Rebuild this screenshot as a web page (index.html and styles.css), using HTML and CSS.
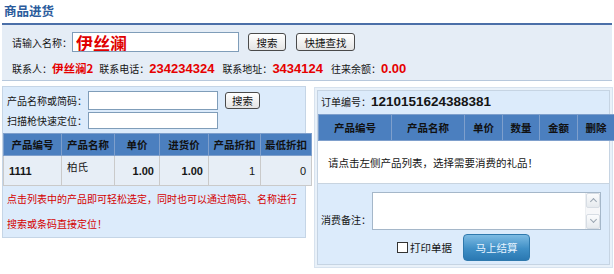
FILE: index.html
```html
<!DOCTYPE html>
<html lang="zh-CN">
<head>
    <title>商品进货</title>
    <meta charset="utf-8">
    <link rel="stylesheet" href="styles.css">
</head>
<body>
    <div class="page">
        <h2 class="page-title">商品进货</h2>

        <div class="topbar">
            <div class="top-row">
                <span class="label">请输入名称：</span>
                <input type="text" class="name-input" value="伊丝澜">
                <button type="button" class="btn btn-search">搜索</button>
                <button type="button" class="btn btn-quick">快捷查找</button>
            </div>
            <div class="contact-row">
                <span>联系人：</span><b class="red name">伊丝澜2</b>
                <span>联系电话：</span><b class="red">234234324</b>
                <span>联系地址：</span><b class="red">3434124</b>
                <span>往来余额：</span><b class="red">0.00</b>
            </div>
        </div>

        <div class="main">
            <div class="left-panel">
                <div class="search-box">
                    <div class="search-row">
                        <span class="label">产品名称或简码：</span>
                        <input type="text" class="code-input">
                        <button type="button" class="btn btn-find">搜索</button>
                    </div>
                    <div class="search-row">
                        <span class="label">扫描枪快速定位：</span>
                        <input type="text" class="code-input scan">
                    </div>
                </div>
                <table class="grid product-grid">
                    <thead>
                        <tr>
                            <th class="c1">产品编号</th>
                            <th class="c2">产品名称</th>
                            <th class="c3">单价</th>
                            <th class="c4">进货价</th>
                            <th class="c5">产品折扣</th>
                            <th class="c6">最低折扣</th>
                        </tr>
                    </thead>
                    <tbody>
                        <tr>
                            <td class="bold">1111</td>
                            <td class="name-cell">柏氏</td>
                            <td class="num bold">1.00</td>
                            <td class="num bold">1.00</td>
                            <td class="num">1</td>
                            <td class="num">0</td>
                        </tr>
                    </tbody>
                </table>
                <p class="tip">点击列表中的产品即可轻松选定，同时也可以通过简码、名称进行搜索或条码直接定位！</p>
            </div>

            <div class="right-panel">
                <div class="order-box">
                    <div class="order-no">订单编号：<b>1210151624388381</b></div>
                    <table class="grid order-grid">
                        <thead>
                            <tr>
                                <th class="o1">产品编号</th>
                                <th class="o2">产品名称</th>
                                <th class="o3">单价</th>
                                <th class="o4">数量</th>
                                <th class="o5">金额</th>
                                <th class="o6">删除</th>
                            </tr>
                        </thead>
                    </table>
                    <div class="order-empty">请点击左侧产品列表，选择需要消费的礼品！</div>
                    <div class="remark-row">
                        <span class="label">消费备注：</span>
                        <div class="remark-box">
                            <textarea class="remark"></textarea>
                            <div class="scrollbar">
                                <span class="arrow up"></span>
                                <span class="arrow down"></span>
                            </div>
                        </div>
                    </div>
                    <div class="submit-row">
                        <label class="print"><span class="check"></span>打印单据</label>
                        <button type="button" class="btn-pay">马上结算</button>
                    </div>
                </div>
            </div>
        </div>
    </div>
</body>
</html>
```

FILE: styles.css
```css
body {
    margin: 0;
    font-family: "Noto Sans CJK SC", sans-serif;
    font-size: 10px;
    color: #151515;
    background: #fff;
}

.page {
    width: 610px;
    padding: 0 2px;
}

.page-title {
    margin: 0;
    height: 23px;
    line-height: 22px;
    padding-left: 2px;
    font-size: 12.5px;
    font-weight: bold;
    color: #2b5b9c;
}

/* top search bar */
.topbar {
    border-top: 2px solid #4b6fa8;
    border-bottom: 1px solid #b7c8dc;
    background: #e5edf6;
    height: 55px;
    padding-left: 10px;
}

.top-row {
    display: flex;
    align-items: center;
    height: 20px;
    padding-top: 7px;
}

.name-input {
    box-sizing: border-box;
    width: 167px;
    height: 20px;
    margin: 0 9px 0 0;
    padding: 0 3px;
    border: 1px solid #7f9db9;
    font-family: "Noto Sans CJK SC", sans-serif;
    font-size: 17px;
    font-weight: bold;
    color: #e00000;
    line-height: 18px;
}

.btn {
    box-sizing: border-box;
    height: 18px;
    padding: 0;
    border: 1px solid #4a4a4a;
    border-radius: 3px;
    background: linear-gradient(#ffffff, #e4e4e4);
    font-family: "Noto Sans CJK SC", sans-serif;
    font-size: 10.5px;
    line-height: 15px;
    color: #111;
}

.btn-search {
    width: 38px;
    margin-right: 10px;
}

.btn-quick {
    width: 59px;
}

.contact-row {
    margin-top: 7px;
    height: 18px;
    display: flex;
    align-items: center;
}

.red {
    color: #e60000;
    font-family: "Liberation Sans", sans-serif;
    font-weight: bold;
    font-size: 13px;
    margin-right: 8px;
}

.red.name {
    font-family: "Noto Sans CJK SC", sans-serif;
    font-size: 11.5px;
    margin-right: 6px;
}

/* main area */
.main {
    display: flex;
    align-items: flex-start;
    gap: 8px;
    margin-top: 5px;
}

.left-panel {
    width: 302px;
    height: 150px;
    border: 1px solid #c5d5e6;
    background: #dcebfb;
}

.search-box {
    padding: 3px 0 0 4px;
    height: 40px;
}

.search-row {
    display: flex;
    align-items: center;
    height: 20px;
}

.search-row + .search-row {
    margin-top: 1px;
    height: 18px;
}

.search-row .label {
    width: 81px;
}

.code-input {
    box-sizing: border-box;
    width: 130px;
    height: 19px;
    margin: 0 7px 0 0;
    border: 1px solid #7f9db9;
    background: #fff;
}

.code-input.scan {
    height: 17px;
}

.btn-find {
    width: 35px;
    height: 17px;
}

.grid {
    border-collapse: collapse;
    table-layout: fixed;
}

.grid th {
    background: #4b7fbf;
    color: #111;
    font-size: 10.5px;
    font-weight: bold;
    text-align: center;
    border: 1px solid #7e9fcc;
    padding: 0;
    white-space: nowrap;
}

.product-grid {
    width: 302px;
    margin-top: 3px;
}

.product-grid th {
    height: 21px;
}

.product-grid td {
    height: 29px;
    padding: 0 5px;
    background: #e7eef6;
    border: 1px solid #cacaca;
    border-top: none;
    font-family: "Liberation Sans", "Noto Sans CJK SC", sans-serif;
    font-size: 11px;
}

.product-grid .name-cell {
    font-family: "Noto Sans CJK SC", sans-serif;
    font-size: 10.5px;
    line-height: 22px;
    vertical-align: top;
}

.product-grid .num {
    text-align: right;
}

.product-grid .bold {
    font-weight: bold;
}

.c1 { width: 57px; }
.c2 { width: 52px; }
.c3 { width: 44px; }
.c4 { width: 48px; }
.c5 { width: 51px; }
.c6 { width: 50px; }

.tip {
    margin: 0;
    padding: 0 4px;
    color: #d40000;
    line-height: 25px;
}

/* right panel */
.right-panel {
    width: 293px;
    margin-top: 1px;
    padding: 2px;
    border: 1px solid #d7e2ee;
    background: #e9f1f9;
}

.order-box {
    border: 1px solid #c6d4e3;
    background: #dcebfb;
    height: 173px;
}

.order-no {
    height: 23px;
    line-height: 21px;
    padding-left: 3px;
}

.order-no b {
    font-family: "Liberation Sans", sans-serif;
    font-size: 13.5px;
}

.order-grid {
    width: 290px;
}

.order-grid th {
    height: 25px;
}

.o1 { width: 72px; }
.o2 { width: 72px; }
.o3 { width: 37px; }
.o4 { width: 36px; }
.o5 { width: 37px; }
.o6 { width: 36px; }

.order-empty {
    background: #fff;
    height: 42px;
    line-height: 44px;
    padding-left: 10px;
    border-bottom: 1px solid #c8d4e0;
    font-size: 10.5px;
}

.remark-row {
    display: flex;
    align-items: flex-end;
    margin-top: 8px;
    padding-left: 3px;
}

.remark-row .label {
    width: 51px;
    line-height: 16px;
    margin-bottom: 2px;
}

.remark-box {
    box-sizing: border-box;
    display: flex;
    width: 229px;
    height: 38px;
    border: 1px solid #a5b7c9;
    background: #fff;
}

.remark {
    flex: 1;
    margin: 0;
    padding: 0;
    border: none;
    resize: none;
    outline: none;
}

.scrollbar {
    width: 14px;
    display: flex;
    flex-direction: column;
    justify-content: space-between;
    background: #f6f7f9;
    border-left: 1px solid #eceff2;
}

.arrow {
    height: 13px;
    border: 1px solid #d7dde4;
    border-radius: 2px;
    background: linear-gradient(#fbfcfd, #e6eaee);
    position: relative;
}

.arrow::after {
    content: "";
    position: absolute;
    left: 4px;
    width: 4px;
    height: 4px;
    border-left: 1px solid #9aa6b2;
    border-top: 1px solid #9aa6b2;
}

.arrow.up::after {
    top: 5px;
    transform: rotate(45deg);
}

.arrow.down::after {
    top: 2px;
    transform: rotate(225deg);
}

.submit-row {
    display: flex;
    align-items: center;
    margin-top: 4px;
    padding-left: 79px;
}

.print {
    display: flex;
    align-items: center;
    width: 66px;
    font-size: 10.5px;
}

.check {
    box-sizing: border-box;
    width: 11px;
    height: 11px;
    margin-right: 2px;
    border: 1px solid #333;
    background: #fff;
}

.btn-pay {
    width: 67px;
    height: 27px;
    border: 1px solid #2f79ad;
    border-radius: 4px;
    background: linear-gradient(#7dbbe3, #3f8fc6 55%, #2a78b2);
    color: #e6f3ff;
    font-family: "Noto Sans CJK SC", sans-serif;
    font-size: 10.5px;
    padding: 0;
}
```
